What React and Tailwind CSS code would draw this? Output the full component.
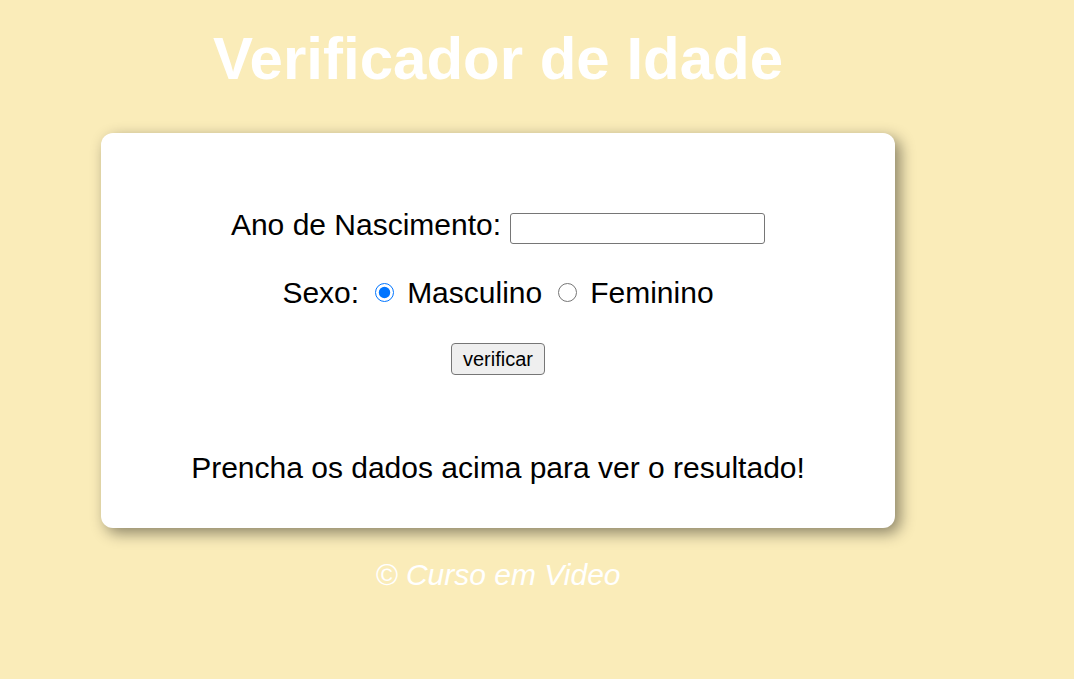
import React from "react";

export default function App() {
  return (
    <div
      className="min-h-[679px] w-full bg-[#faecb9] text-black"
      style={{ fontFamily: '"Liberation Sans", Arial, sans-serif' }}
    >
      <div className="w-[996px] flex flex-col items-center">
        <h1 className="mt-[24px] h-[69px] text-[60px] leading-[69px] font-bold text-white">
          Verificador de Idade
        </h1>

        <div className="mt-[40px] w-[794px] h-[395px] rounded-[12px] bg-white shadow-[5px_5px_15px_rgba(0,0,0,0.45)] flex flex-col items-center">
          <div className="mt-[74px] h-[35px] flex items-center text-[30px] leading-[35px]">
            <label htmlFor="ano">Ano de Nascimento:</label>
            <input
              id="ano"
              type="text"
              className="ml-[9px] mt-[8px] w-[255px] h-[31px] border border-[#767676] rounded-[3px] bg-white px-[3px] text-[20px]"
            />
          </div>

          <div className="mt-[33px] h-[35px] flex items-center text-[30px] leading-[35px]">
            <span>Sexo:</span>
            <input
              type="radio"
              name="sexo"
              defaultChecked
              className="ml-[16px] mr-[13px] w-[19px] h-[19px] accent-[#0075ff]"
            />
            <span>Masculino</span>
            <input
              type="radio"
              name="sexo"
              className="ml-[16px] mr-[13px] w-[19px] h-[19px]"
            />
            <span>Feminino</span>
          </div>

          <button
            type="button"
            className="mt-[33px] w-[94px] h-[32px] bg-[#efefef] border border-[#767676] rounded-[4px] text-[20px] leading-[30px] text-black"
          >
            verificar
          </button>

          <p className="mt-[75px] h-[35px] text-[30px] leading-[35px]">
            Prencha os dados acima para ver o resultado!
          </p>
        </div>

        <p className="mt-[29px] text-[30px] leading-[35px] italic text-white">
          © Curso em Video
        </p>
      </div>
    </div>
  );
}
